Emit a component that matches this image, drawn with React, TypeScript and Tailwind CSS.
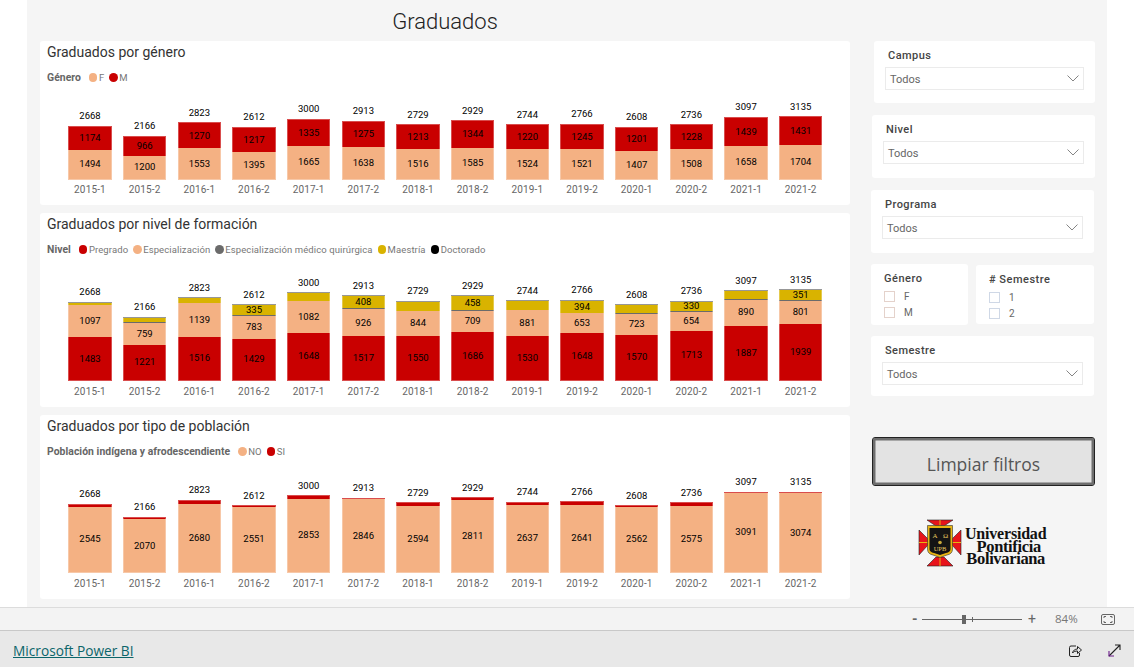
const periods = [
  "2015-1", "2015-2", "2016-1", "2016-2", "2017-1", "2017-2", "2018-1",
  "2018-2", "2019-1", "2019-2", "2020-1", "2020-2", "2021-1", "2021-2",
];
const totals = [2668, 2166, 2823, 2612, 3000, 2913, 2729, 2929, 2744, 2766, 2608, 2736, 3097, 3135];

const RED = "#c90000";
const PEACH = "#f4b183";
const GOLD = "#d9b300";
const GRAY = "#6b6b6b";

interface Segment {
  value: number;
  color: string;
  label?: boolean;
}

// segments go bottom to top
const genero: Segment[][] = [
  [1494, 1174], [1200, 966], [1553, 1270], [1395, 1217], [1665, 1335], [1638, 1275], [1516, 1213],
  [1585, 1344], [1524, 1220], [1521, 1245], [1407, 1201], [1508, 1228], [1658, 1439], [1704, 1431],
].map(([f, m]) => [
  { value: f, color: PEACH, label: true },
  { value: m, color: RED, label: true },
]);

const nivel: Segment[][] = (
  [
    [1483, 1097, 0, 80, 8, false],
    [1221, 759, 20, 160, 6, false],
    [1516, 1139, 0, 160, 8, false],
    [1429, 783, 30, 335, 35, true],
    [1648, 1082, 0, 262, 8, false],
    [1517, 926, 30, 408, 32, true],
    [1550, 844, 0, 300, 35, false],
    [1686, 709, 28, 458, 48, true],
    [1530, 881, 0, 315, 18, false],
    [1648, 653, 30, 394, 41, true],
    [1570, 723, 28, 260, 27, false],
    [1713, 654, 10, 330, 29, true],
    [1887, 890, 10, 280, 30, false],
    [1939, 801, 10, 351, 34, true],
  ] as [number, number, number, number, number, boolean][]
).map(([pre, esp, med, mae, doc, showMae]) => [
  { value: pre, color: RED, label: true },
  { value: esp, color: PEACH, label: true },
  { value: med, color: GRAY },
  { value: mae, color: GOLD, label: showMae },
  { value: doc, color: GRAY },
]);

const poblacion: Segment[][] = [
  [2545, 123], [2070, 96], [2680, 143], [2551, 61], [2853, 147], [2846, 67], [2594, 135],
  [2811, 118], [2637, 107], [2641, 125], [2562, 46], [2575, 161], [3091, 6], [3074, 61],
].map(([no, si]) => [
  { value: no, color: PEACH, label: true },
  { value: si, color: RED },
]);

const legendNivel = [
  { name: "Pregrado", color: RED },
  { name: "Especialización", color: PEACH },
  { name: "Especialización médico quirúrgica", color: GRAY },
  { name: "Maestría", color: GOLD },
  { name: "Doctorado", color: "#000000" },
];

const ChartCard = ({
  title,
  legendTitle,
  legend,
  data,
  scale,
  className,
  labelClass,
}: {
  title: string;
  legendTitle: string;
  legend: { name: string; color: string }[];
  data: Segment[][];
  scale: number;
  className: string;
  labelClass: string;
}) => (
  <section className={`flex flex-col rounded-[3px] bg-white pl-[7px] ${className}`}>
    <h2 className="mt-[2px] text-[14px] leading-[18px] text-[#333]">{title}</h2>
    <div className="mt-[9.5px] flex items-center text-[9.5px] leading-[14px] text-[#777]">
      <span className="mr-[8px] text-[10.4px] font-bold tracking-[0.05px] text-[#666]">{legendTitle}</span>
      {legend.map((l) => (
        <span key={l.name} className="mr-[5px] flex items-center tracking-[0.1px]">
          <span className="mr-[1.5px] h-[8.5px] w-[8.5px] rounded-full" style={{ backgroundColor: l.color }} />
          {l.name}
        </span>
      ))}
    </div>

    <div className="mt-auto ml-[15.67px] grid w-[765.4px] grid-cols-14">
      {data.map((segments, i) => (
        <div key={periods[i]} className="flex flex-col items-center justify-end">
          <span className="mb-[3.5px] text-[9.5px] leading-[13px] text-black">{totals[i]}</span>
          <div className="flex w-[43.4px] flex-col-reverse">
            {segments
              .filter((s) => s.value > 0)
              .map((s, j) => (
                <div
                  key={j}
                  className="flex items-center justify-center overflow-visible border-x border-white/30 text-[9.5px] text-black first:border-b last:border-t"
                  style={{ backgroundColor: s.color, height: s.value * scale }}
                >
                  {s.label && s.value}
                </div>
              ))}
          </div>
          <span className={`text-[10px] leading-[13px] tracking-[0.15px] text-[#666] ${labelClass}`}>
            {periods[i]}
          </span>
        </div>
      ))}
    </div>
  </section>
);

const Dropdown = ({
  label,
  className,
  boxClass,
}: {
  label: string;
  className: string;
  boxClass: string;
}) => (
  <div className={`rounded-[3px] bg-white pt-[8px] pl-[11px] ${className}`}>
    <div className="pl-[3px] text-[11px] leading-[14px] font-medium tracking-[0.45px] text-[#444]">{label}</div>
    <div
      className={`mt-[4px] flex h-[23px] items-center justify-between border border-[#ebebeb] pr-[4px] pl-[4px] text-[11px] text-[#666] ${boxClass}`}
    >
      <span className="pt-[4px]">Todos</span>
      <svg width="12" height="7" viewBox="0 0 12 7" fill="none" stroke="#666" strokeWidth="0.8">
        <path d="M0.5 0.5L6 6L11.5 0.5" />
      </svg>
    </div>
  </div>
);

const CheckList = ({
  label,
  items,
  className,
  boxClass,
}: {
  label: string;
  items: string[];
  className: string;
  boxClass: string;
}) => (
  <div className={`rounded-[3px] bg-white pt-[8px] pl-[13px] ${className}`}>
    <div className="mb-[3px] text-[11px] leading-[14px] font-medium tracking-[0.5px] text-[#444]">{label}</div>
    {items.map((item) => (
      <div key={item} className="mt-[5px] flex h-[11px] items-center text-[10px] text-[#666]">
        <span className={`mr-[9px] h-[11px] w-[11px] border ${boxClass}`} />
        {item}
      </div>
    ))}
  </div>
);

const UpbLogo = () => (
  <div className="mt-[32px] ml-[47px] flex h-[49px] items-center">
    <svg width="44" height="48" viewBox="0 0 44 48" className="shrink-0">
      <g fill="#e8141c" stroke="#222" strokeWidth="0.6">
        <path d="M9 1H35L26 7H18Z" />
        <path d="M9 47H35L26 38H18Z" />
        <path d="M1 11V36L10 26V20Z" />
        <path d="M43 11V36L34 26V20Z" />
      </g>
      <g stroke="#e8b512" strokeWidth="1">
        <path d="M22 1V7M22 38V47M1 23.5H10M34 23.5H43" />
      </g>
      <path d="M9.5 6.5H34.5V30Q34.5 35 29 36L22 38.5L15 36Q9.5 35 9.5 30Z" fill="#e8b512" stroke="#333" strokeWidth="0.6" />
      <path d="M11.5 9H32.5V30Q32.5 33 28 34L22 36L16 34Q11.5 33 11.5 30Z" fill="#141414" />
      <g fill="#e6c860" fontFamily="Liberation Serif, serif" fontSize="7" textAnchor="middle">
        <text x="17" y="18.5">A</text>
        <text x="27.5" y="18.5">Ω</text>
        <text x="22" y="31.5" fontSize="6.5">UPB</text>
      </g>
      <circle cx="22" cy="23.5" r="1.8" fill="#c9a93a" />
    </svg>
    <div className="ml-[3px] flex flex-col items-center pt-[9px] font-['Liberation_Serif',serif] text-[16.5px] leading-[12.5px] font-bold tracking-[-0.35px] text-[#111]">
      <span className="text-[16px] tracking-[-0.2px]">Universidad</span>
      <span className="pl-[6px]">Pontificia</span>
      <span>Bolivariana</span>
    </div>
  </div>
);

export default function App() {
  return (
    <div className="flex h-[667px] w-[1134px] flex-col overflow-hidden bg-white font-['Roboto',sans-serif]">
      <main className="mx-[27px] flex h-[607px] w-[1080px] shrink-0 bg-[#f5f5f5]">
        <div className="ml-[13px] flex w-[810px] flex-col gap-[8px]">
          <h1 className="flex h-[33px] items-start justify-center pt-[5px] text-[22px] leading-[34px] font-light text-[#222]">
            Graduados
          </h1>
          <ChartCard
            title="Graduados por género"
            legendTitle="Género"
            legend={[
              { name: "F", color: PEACH },
              { name: "M", color: RED },
            ]}
            data={genero}
            scale={0.0204}
            className="h-[164px]"
            labelClass="mt-[3px] mb-[9px]"
          />
          <ChartCard
            title="Graduados por nivel de formación"
            legendTitle="Nivel"
            legend={legendNivel}
            data={nivel}
            scale={0.02935}
            className="h-[194px]"
            labelClass="mt-[4px] mb-[9px]"
          />
          <ChartCard
            title="Graduados por tipo de población"
            legendTitle="Población indígena y afrodescendiente"
            legend={[
              { name: "NO", color: PEACH },
              { name: "SI", color: RED },
            ]}
            data={poblacion}
            scale={0.0259}
            className="h-[184px]"
            labelClass="mt-[4px] mb-[9px]"
          />
        </div>

        <aside className="ml-[21px] flex w-[224px] flex-col pt-[41px]">
          <Dropdown label="Campus" className="ml-[3px] h-[62px] w-[221px]" boxClass="w-[199px]" />
          <Dropdown label="Nivel" className="mt-[12px] ml-[1px] h-[63px] w-[223px]" boxClass="w-[201px]" />
          <Dropdown label="Programa" className="mt-[12px] h-[63px] w-[223px]" boxClass="w-[201px]" />
          <div className="mt-[11px] flex items-start gap-[8px]">
            <CheckList label="Género" items={["F", "M"]} className="h-[61px] w-[97px]" boxClass="border-[#e4d2cb]" />
            <CheckList label="# Semestre" items={["1", "2"]} className="mt-[1px] h-[59px] w-[118px]" boxClass="border-[#cfd8e6]" />
          </div>
          <Dropdown label="Semestre" className="mt-[11px] h-[60px] w-[223px]" boxClass="w-[201px]" />
          <button className="mt-[41px] ml-[1px] flex h-[49px] w-[223px] items-center justify-center rounded-[3px] border border-[#222] bg-[#e3e3e3] pt-[6px] font-['Open_Sans',sans-serif] text-[17.5px] text-[#555] shadow-[inset_0_0_0_2.5px_#6e6e6e]">
            Limpiar filtros
          </button>
          <UpbLogo />
        </aside>
      </main>

      <div className="flex h-[23px] shrink-0 items-center border-t border-[#dcdcdc] bg-[#f3f3f3] text-[#666]">
        <span className="ml-[912px] w-[10px] text-[14px] leading-none font-bold">-</span>
        <div className="relative h-[1px] w-[100px] bg-[#666]">
          <span className="absolute top-[-4px] left-[40px] h-[9px] w-[4px] bg-[#666]" />
          <span className="absolute top-[-2px] left-[50px] h-[5px] w-[1px] bg-[#666]" />
        </div>
        <span className="ml-[6px] w-[14px] text-[14px] leading-none">+</span>
        <span className="ml-[13px] w-[24px] font-['Open_Sans',sans-serif] text-[11.5px] text-[#777]">84%</span>
        <svg width="14" height="11" viewBox="0 0 14 11" className="ml-[22px]" fill="none" stroke="#666" strokeWidth="1">
          <rect x="0.5" y="0.5" width="13" height="10" rx="1.5" />
          <path d="M3 4V2.5H5M9 2.5H11V4M11 7V8.5H9M5 8.5H3V7" />
        </svg>
      </div>

      <footer className="flex h-[37px] shrink-0 items-center border-t border-[#c8c8c8] bg-[#e8e8e8]">
        <a href="#" className="ml-[13px] pt-[4px] font-['Open_Sans',sans-serif] text-[13.7px] text-[#0b656a] underline">
          Microsoft Power BI
        </a>
        <svg width="13" height="12" viewBox="0 0 13 12" className="mt-[3px] ml-[935px]" fill="none" stroke="#222" strokeWidth="1">
          <path d="M7 1H2A1.5 1.5 0 0 0 0.5 2.5V10A1.5 1.5 0 0 0 2 11.5H9A1.5 1.5 0 0 0 10.5 10V8" />
          <path d="M3.5 8C4 5.5 6 4 8.5 4V1.5L12.5 5L8.5 8.5V6C6.5 6 4.5 6.5 3.5 8Z" />
        </svg>
        <svg width="13" height="13" viewBox="0 0 13 13" className="mt-[3px] ml-[26px]" fill="none" stroke="#222" strokeWidth="1.1">
          <path d="M1 12L12 1M7 1H12V6" />
          <path d="M1 7V12H6" stroke="#6a1b8a" />
        </svg>
      </footer>
    </div>
  );
}
